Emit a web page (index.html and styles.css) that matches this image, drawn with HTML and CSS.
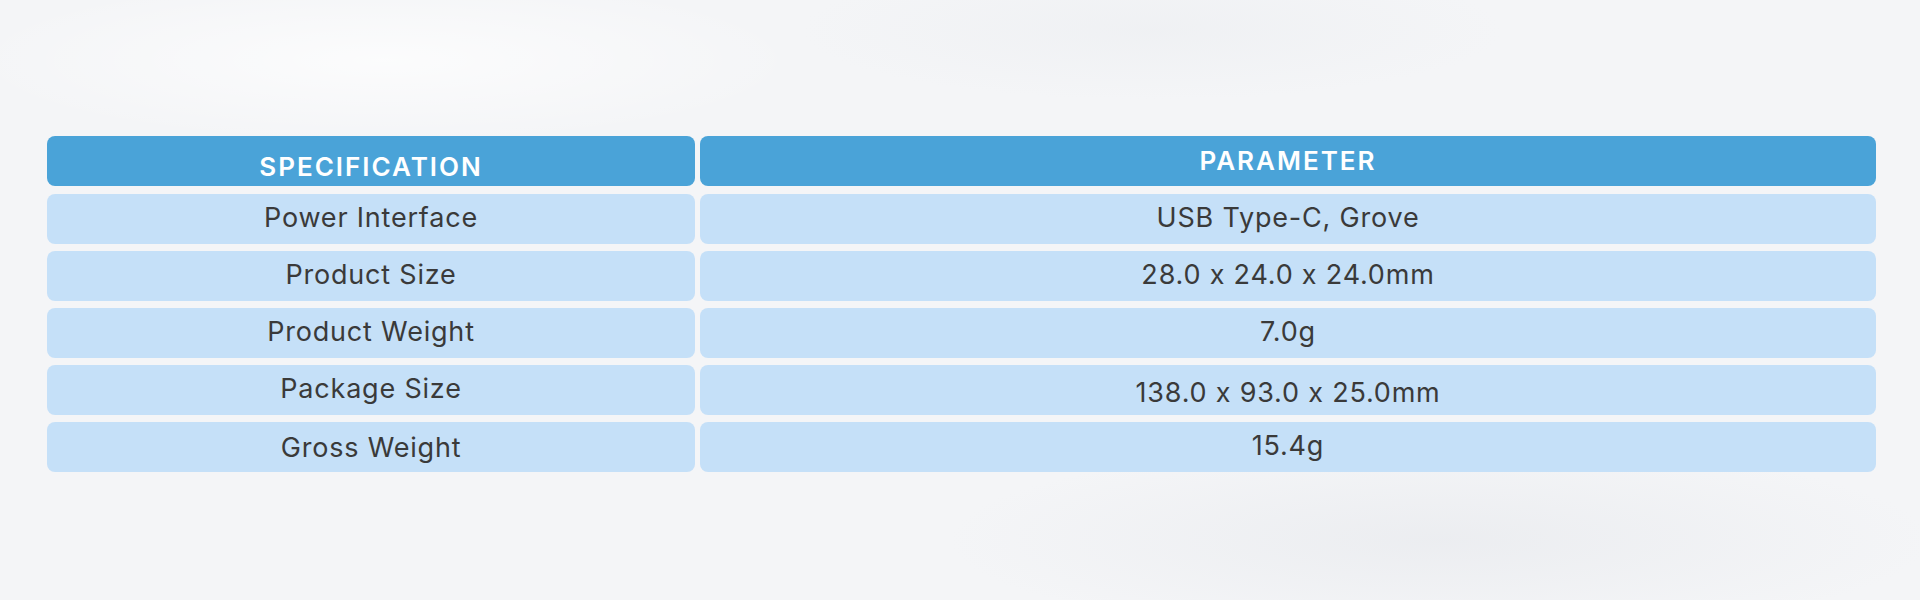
FILE: index.html
```html
<!DOCTYPE html>
<html lang="en">
<head>
<meta charset="utf-8">
<title>Specifications</title>
<link rel="stylesheet" href="styles.css">
</head>
<body>
<main class="page">
  <section class="spec-table">
    <div class="row head">
      <div class="cell spec-head">SPECIFICATION</div>
      <div class="cell">PARAMETER</div>
    </div>
    <div class="row">
      <div class="cell">Power Interface</div>
      <div class="cell">USB Type-C, Grove</div>
    </div>
    <div class="row">
      <div class="cell">Product Size</div>
      <div class="cell">28.0 x 24.0 x 24.0mm</div>
    </div>
    <div class="row">
      <div class="cell">Product Weight</div>
      <div class="cell">7.0g</div>
    </div>
    <div class="row">
      <div class="cell">Package Size</div>
      <div class="cell low">138.0 x 93.0 x 25.0mm</div>
    </div>
    <div class="row">
      <div class="cell mid">Gross Weight</div>
      <div class="cell">15.4g</div>
    </div>
  </section>
</main>
</body>
</html>
```
FILE: styles.css
```css
html, body {
  margin: 0;
  padding: 0;
}
body {
  width: 1920px;
  height: 600px;
  overflow: hidden;
  background-color: #f4f5f7;
  background-image:
    radial-gradient(ellipse 600px 120px at 20% 10%, rgba(255,255,255,0.7), rgba(255,255,255,0) 70%),
    radial-gradient(ellipse 700px 140px at 75% 90%, rgba(230,232,236,0.6), rgba(230,232,236,0) 70%),
    radial-gradient(ellipse 500px 100px at 60% 5%, rgba(236,238,241,0.6), rgba(236,238,241,0) 70%);
  font-family: Inter, "Open Sans", "Liberation Sans", sans-serif;
}
.page {
  padding: 136px 44px 0 47px;
}
.spec-table {
  width: 1829px;
  display: flex;
  flex-direction: column;
  gap: 7px;
}
.row {
  display: grid;
  grid-template-columns: 648px 1fr;
  column-gap: 5px;
}
.cell {
  height: 50px;
  box-sizing: border-box;
  border-radius: 8px;
  background: #c5e0f8;
  color: #3a3a3a;
  font-size: 27px;
  font-weight: 400;
  letter-spacing: 0.8px;
  display: flex;
  align-items: center;
  justify-content: center;
  padding-bottom: 3px;
}
.cell.low {
  padding-bottom: 0;
  padding-top: 4px;
}
.cell.mid {
  padding-bottom: 0;
  padding-top: 1px;
}
.head {
  margin-bottom: 1px;
}
.head .cell {
  background: #4aa3d8;
  color: #ffffff;
  font-weight: 600;
  font-size: 26px;
  letter-spacing: 2px;
  padding-bottom: 1px;
}
.head .spec-head {
  padding-bottom: 0;
  padding-top: 10px;
}
```
